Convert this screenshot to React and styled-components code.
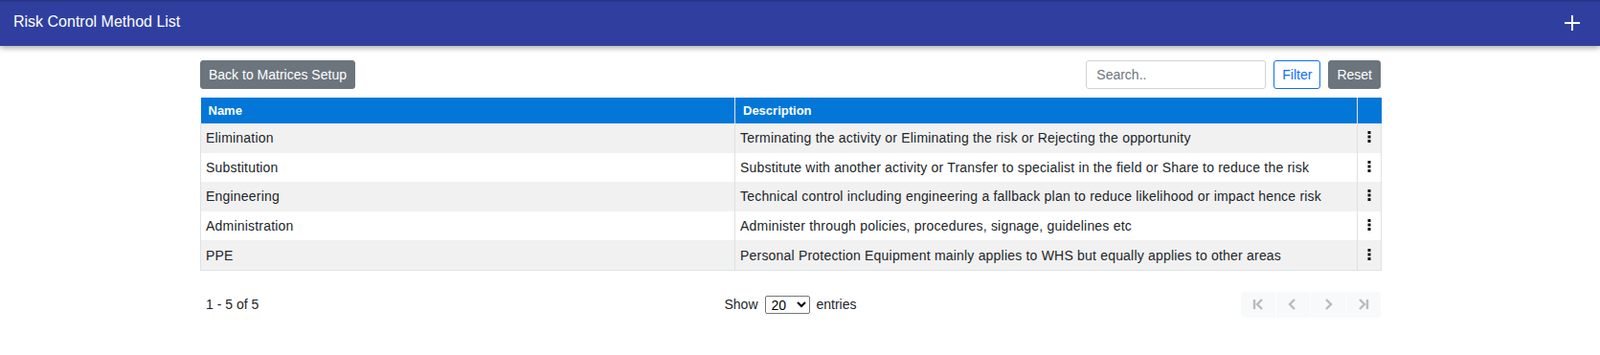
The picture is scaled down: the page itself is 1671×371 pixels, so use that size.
import React from "react";
import styled, {createGlobalStyle} from "styled-components";

const GlobalStyle = createGlobalStyle`
  body {
    margin: 0;
    background: #fff;
    font-family: "Liberation Sans", Arial, sans-serif;
    color: #212529;
  }
`;

const rows = [
    {name: "Elimination", description: "Terminating the activity or Eliminating the risk or Rejecting the opportunity"},
    {name: "Substitution", description: "Substitute with another activity or Transfer to specialist in the field or Share to reduce the risk"},
    {name: "Engineering", description: "Technical control including engineering a fallback plan to reduce likelihood or impact hence risk"},
    {name: "Administration", description: "Administer through policies, procedures, signage, guidelines etc"},
    {name: "PPE", description: "Personal Protection Equipment mainly applies to WHS but equally applies to other areas"},
];

const TopBar = styled.header`
  height: 48px;
  background: #303f9f;
  display: flex;
  align-items: center;
  justify-content: space-between;
  padding: 0 21px 0 14px;
  box-shadow: 0 2px 6px rgba(0, 0, 0, 0.35), inset 0 3px 3px -2px rgba(0, 0, 0, 0.25);
  position: relative;
`;

const Title = styled.h1`
  margin: 0 0 2px;
  font-size: 16px;
  font-weight: 400;
  color: #fff;
`;

const AddButton = styled.button`
  border: none;
  background: none;
  padding: 0;
  width: 16px;
  height: 16px;
  display: flex;
  cursor: pointer;
`;

const Content = styled.main`
  width: 1233px;
  margin-left: 209px;
  padding-top: 15px;
`;

const Toolbar = styled.div`
  display: flex;
  align-items: center;
  justify-content: space-between;
  margin-bottom: 9px;
`;

const Actions = styled.div`
  display: flex;
  align-items: center;
  gap: 8px;
`;

const Button = styled.button`
  height: 30px;
  padding: 0 8px;
  font-family: inherit;
  font-size: 14px;
  border-radius: 3px;
  cursor: pointer;
  border: 1px solid ${p => p.$outline ? "#0d6efd" : "#6c757d"};
  background: ${p => p.$outline ? "#fff" : "#6c757d"};
  color: ${p => p.$outline ? "#0d6efd" : "#fff"};
`;

const SearchInput = styled.input`
  width: 188px;
  height: 30px;
  box-sizing: border-box;
  padding: 0 10px;
  font-family: inherit;
  font-size: 14px;
  border: 1px solid #ced4da;
  border-radius: 3px;
  &::placeholder {
    color: #6c757d;
  }
`;

const Table = styled.table`
  width: 100%;
  border-collapse: collapse;
  table-layout: fixed;
  font-size: 14px;
  border-bottom: 1px solid #dee2e6;
`;

const Th = styled.th`
  background: #0277d8;
  color: #fff;
  text-align: left;
  font-size: 13px;
  font-weight: 700;
  height: 27px;
  padding: 0 8px;
  border-right: 1px solid #e4e4e4;
  &:last-child {
    border-right: none;
  }
`;

const Tr = styled.tr`
  background: ${p => p.$striped ? "#f1f1f1" : "#fff"};
  & + & td {
    border-top: 1px solid #dee2e6;
  }
`;

const Td = styled.td`
  height: 30.6px;
  padding: 0 5px;
  color: #212529;
  letter-spacing: 0.2px;
  border-left: 1px solid #dee2e6;
  white-space: nowrap;
  &:last-child {
    border-right: 1px solid #dee2e6;
    text-align: center;
    padding: 0;
  }
`;

const Footer = styled.div`
  display: grid;
  grid-template-columns: 1fr auto 1fr;
  align-items: center;
  margin-top: 22px;
  font-size: 14px;
  color: #212529;
`;

const Count = styled.span`
  padding-left: 6px;
`;

const ShowEntries = styled.label`
  display: flex;
  align-items: center;
  gap: 7px;
`;

const PageSelect = styled.select`
  height: 19px;
  width: 47px;
  font-family: inherit;
  font-size: 14px;
  border: 1px solid #767676;
  border-radius: 2px;
  padding: 0 0 0 2px;
  background: #fff;
  color: #000;
`;

const Pager = styled.div`
  justify-self: end;
  display: flex;
  height: 27px;
  border-radius: 4px;
  overflow: hidden;
`;

const PageButton = styled.button`
  width: 36.5px;
  height: 27px;
  border: none;
  background: #f8f9fa;
  display: flex;
  align-items: center;
  justify-content: center;
  padding: 0;
  border-right: 1px solid #fdfdfd;
  &:last-child {
    border-right: none;
  }
`;

const PagerIcon = ({d}) => (
    <svg width="14" height="14" viewBox="0 0 14 14" fill="none" stroke="#b9bbbd" strokeWidth="2.4">
        <path d={d}/>
    </svg>
);

const Kebab = () => (
    <svg width="4" height="12" viewBox="0 0 4 12" fill="#111">
        <rect x="0.5" y="0" width="3" height="3"/>
        <rect x="0.5" y="4.5" width="3" height="3"/>
        <rect x="0.5" y="9" width="3" height="3"/>
    </svg>
);

const App = () => {
    return (
        <>
            <GlobalStyle/>
            <TopBar>
                <Title>Risk Control Method List</Title>
                <AddButton aria-label="Add">
                    <svg width="16" height="16" viewBox="0 0 16 16" stroke="#fff" strokeWidth="2">
                        <path d="M8 0v16M0 8h16"/>
                    </svg>
                </AddButton>
            </TopBar>
            <Content>
                <Toolbar>
                    <Button>Back to Matrices Setup</Button>
                    <Actions>
                        <SearchInput placeholder="Search.."/>
                        <Button $outline>Filter</Button>
                        <Button>Reset</Button>
                    </Actions>
                </Toolbar>
                <Table>
                    <colgroup>
                        <col style={{width: 558}}/>
                        <col style={{width: 650}}/>
                        <col style={{width: 25}}/>
                    </colgroup>
                    <thead>
                    <tr>
                        <Th>Name</Th>
                        <Th>Description</Th>
                        <Th/>
                    </tr>
                    </thead>
                    <tbody>
                    {rows.map((row, i) => (
                        <Tr key={row.name} $striped={i % 2 === 0}>
                            <Td>{row.name}</Td>
                            <Td>{row.description}</Td>
                            <Td><Kebab/></Td>
                        </Tr>
                    ))}
                    </tbody>
                </Table>
                <Footer>
                    <Count>1 - 5 of 5</Count>
                    <ShowEntries>
                        Show
                        <PageSelect defaultValue="20">
                            <option>10</option>
                            <option>20</option>
                            <option>50</option>
                        </PageSelect>
                        entries
                    </ShowEntries>
                    <Pager>
                        <PageButton><PagerIcon d="M3 2v10M11 2L6 7l5 5"/></PageButton>
                        <PageButton><PagerIcon d="M9 2L4 7l5 5"/></PageButton>
                        <PageButton><PagerIcon d="M5 2l5 5-5 5"/></PageButton>
                        <PageButton><PagerIcon d="M11 2v10M3 2l5 5-5 5"/></PageButton>
                    </Pager>
                </Footer>
            </Content>
        </>
    );
};

export default App;
